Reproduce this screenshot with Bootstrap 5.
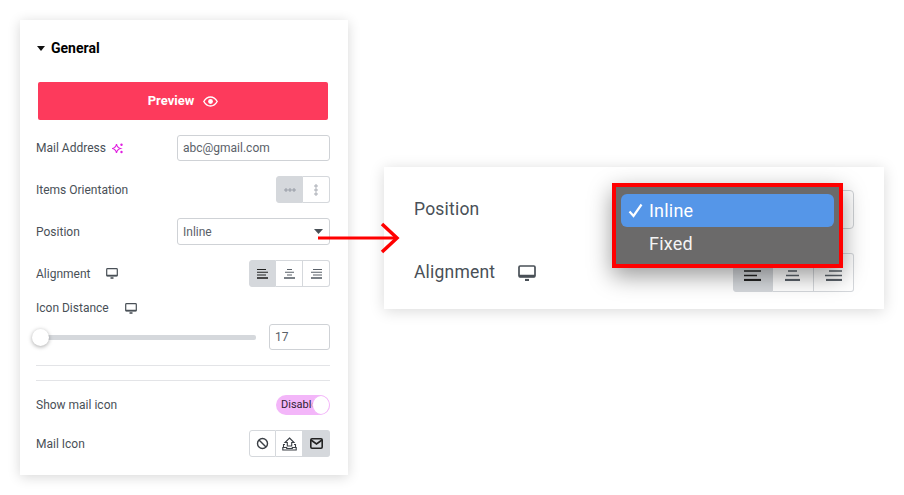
<!DOCTYPE html>
<html lang="en">
<head>
  <meta charset="UTF-8">
  <title>Mail settings</title>
  <link rel="stylesheet" href="https://cdn.jsdelivr.net/npm/bootstrap@5.3.0/dist/css/bootstrap.min.css">
  <style>
  body { background: #fff; font-family: Roboto, "Liberation Sans", sans-serif; color: #495057; height: 495px; overflow: hidden; position: relative; }
  .side-panel { width: 328px; height: 455px; margin: 20px 0 0 20px; padding: 14px 18px 0 16px; background: #fff; box-shadow: 0 2px 12px rgba(0,0,0,.16); flex: none; }
  .zoom-panel { width: 500px; height: 142px; margin: 167px 0 0 36px; padding: 23px 30px 0; background: #fff; box-shadow: 0 2px 14px rgba(0,0,0,.15); flex: none; position: relative; }
  .panel-head { height: 28px; font-size: 14px; font-weight: 700; color: #000; gap: 6px; margin-bottom: 20px; }
  .caret-down { width: 0; height: 0; margin-left: 1px; border-left: 4.5px solid transparent; border-right: 4.5px solid transparent; border-top: 5px solid #111; }
  .preview-btn { display: flex; width: 290px; height: 38px; margin: 0 0 15px 2px; padding: 0; border: 0; border-radius: 2px; background: #fd3a5c; color: #fff; font-size: 13px; font-weight: 700; gap: 9px; }
  .preview-btn:hover { background: #fd3a5c; color: #fff; }
  .set-row { font-size: 12px; margin-bottom: 15px; height: 26px; }
  .set-row.tall { height: 27px; }
  .mon-icon { margin-left: 16px; }
  .spark-icon { margin-left: 6px; }
  .txt-box { width: 153px; height: 100%; min-height: 0; padding: 0 5px; border: 1px solid #cfd2d6; border-radius: 3px; font-size: 12px; color: #5a6169; box-shadow: none; }
  .txt-box.sel { background-image: url("data:image/svg+xml,%3Csvg xmlns='http://www.w3.org/2000/svg' width='9' height='5'%3E%3Cpath d='M0 0h9L4.500 5z' fill='%23495057'/%3E%3C/svg%3E"); background-size: 9px 5px; background-position: right 6px center; }
  .seg-group { height: 100%; }
  .seg-btn { display: flex; align-items: center; justify-content: center; width: 27px; height: 100%; padding: 0; background: #fff; border: 1px solid #d5d8dc; border-radius: 0; }
  .seg-btn + .seg-btn { border-left: 0; }
  .seg-btn:first-child { border-radius: 3px 0 0 3px; }
  .seg-btn:last-child { border-radius: 0 3px 3px 0; }
  .seg-btn.on { background: #d5d8dc; }
  .label-row { height: 20px; margin: -4px 0 0; }
  .slide-row { height: 26px; margin: 6px 0 15px 0; }
  .slide-track { width: 216px; height: 5px; margin-left: 4px; background: #d5d8dc; border-radius: 2px; position: relative; }
  .slide-knob { position: absolute; left: -8px; top: -6px; width: 17px; height: 17px; border-radius: 50%; background: #fff; box-shadow: 0 1px 4px rgba(0,0,0,.35); }
  .num-box { width: 61px; }
  .rule-line { height: 1px; background: #e3e4e7; margin: 0 0 14px; }
  .short-row { height: 20px; }
  .sw-box { position: relative; width: 54px; height: 20px; border-radius: 10px; background: #f3b6f9; color: #2f2233; font-size: 11px; overflow: hidden; padding: 2px 0 0 5px; line-height: 16px; white-space: nowrap; }
  .sw-knob { position: absolute; right: 0; top: 0; width: 18px; height: 20px; border-radius: 50%; background: #fff; border: 1px solid #f3b6f9; }
  .big-row { font-size: 17.5px; letter-spacing: .2px; height: 39px; margin-bottom: 24px; }
  .big-row .mon-icon { margin-left: 23px; }
  .big-select { width: 240px; height: 39px; border: 1px solid #cfd2d6; border-radius: 4px; }
  .big-group { height: 39px; }
  .big-group .seg-btn { width: 40.5px; }
  .mac-menu { position: absolute; left: 228px; top: 16px; width: 231px; height: 85px; padding: 7px 5px; background: #6b6a6a; border: 4px solid #f00; box-shadow: 0 8px 22px rgba(0,0,0,.4); color: #f4f4f4; font-size: 18px; letter-spacing: .2px; }
  .mac-item { height: 33px; padding-left: 7px; border-radius: 6px; gap: 6px; }
  .mac-item.picked { background: #5596e8; color: #fff; }
  .mac-item .tick-space { width: 15px; flex: none; }
  .red-arrow { position: absolute; left: 316px; top: 222px; }
  </style>
</head>
<body class="d-flex align-items-start">
  <div class="side-panel">
    <div class="panel-head d-flex align-items-center"><span class="caret-down d-inline-block"></span><span>General</span></div>

    <button class="btn preview-btn align-items-center justify-content-center">Preview
      <svg width="15" height="11" viewBox="0 0 15 11"><path d="M.8 5.500C2.500 2.600 4.800 1 7.500 1s5 1.600 6.700 4.500C12.500 8.400 10.200 10 7.500 10S2.500 8.400.8 5.500z" fill="none" stroke="#fff" stroke-width="1.400"/><circle cx="7.500" cy="5.500" r="2.400" fill="#fff"/></svg>
    </button>

    <div class="set-row d-flex align-items-center justify-content-between">
      <span class="d-flex align-items-center">Mail Address
        <svg class="spark-icon" width="11" height="11" viewBox="0 0 11 11" fill="none"><path d="M4.500 1Q5 4.500 8.500 5.500 5 6.500 4.500 10 4 6.500.5 5.500 4 4.500 4.500 1z" stroke="#e01fe0" stroke-width="1.200"/><circle cx="9.500" cy="1.800" r="1.200" fill="#e01fe0"/><circle cx="9.500" cy="9" r="1.200" fill="#e01fe0"/></svg>
      </span>
      <input class="form-control txt-box" value="abc@gmail.com">
    </div>

    <div class="set-row tall d-flex align-items-center justify-content-between">
      <span>Items Orientation</span>
      <div class="seg-group d-flex">
        <div class="seg-btn on"><svg width="12" height="4" viewBox="0 0 12 4" fill="none" stroke="#6b7280" stroke-width=".6"><circle cx="2" cy="2" r="1.200"/><circle cx="6" cy="2" r="1.200"/><circle cx="10" cy="2" r="1.200"/></svg></div>
        <div class="seg-btn"><svg width="4" height="12" viewBox="0 0 4 12" fill="none" stroke="#6b7280" stroke-width=".6"><circle cx="2" cy="2" r="1.200"/><circle cx="2" cy="6" r="1.200"/><circle cx="2" cy="10" r="1.200"/></svg></div>
      </div>
    </div>

    <div class="set-row tall d-flex align-items-center justify-content-between">
      <span>Position</span>
      <select class="form-select txt-box sel"><option>Inline</option><option>Fixed</option></select>
    </div>

    <div class="set-row tall d-flex align-items-center justify-content-between">
      <span class="d-flex align-items-center">Alignment
        <svg class="mon-icon" width="12" height="11" viewBox="0 0 12 11" fill="none"><rect x=".7" y=".7" width="10.600" height="7.300" rx=".8" stroke="#495057" stroke-width="1.200"/><path d="M.7 7.500h10.600" stroke="#495057" stroke-width="1.500"/><path d="M4.500 10h3" stroke="#495057" stroke-width="1.600"/></svg>
      </span>
      <div class="seg-group d-flex">
        <div class="seg-btn on"><svg width="11" height="10" viewBox="0 0 11 10" stroke="#222" stroke-width="1.100"><path d="M0 .5h9M0 3.300h11M0 6h9"/><path d="M0 9h11" stroke-width="1.600"/></svg></div>
        <div class="seg-btn"><svg width="11" height="10" viewBox="0 0 11 10" stroke="#5a6169" stroke-width="1.100"><path d="M3 .5h5M1 3.300h9M3 6h5"/><path d="M0 9h11" stroke-width="1.600"/></svg></div>
        <div class="seg-btn"><svg width="11" height="10" viewBox="0 0 11 10" stroke="#5a6169" stroke-width="1.100"><path d="M2 .5h9M0 3.300h11M2 6h9"/><path d="M0 9h11" stroke-width="1.600"/></svg></div>
      </div>
    </div>

    <div class="set-row label-row d-flex align-items-center">
      <span class="d-flex align-items-center">Icon Distance
        <svg class="mon-icon" width="12" height="11" viewBox="0 0 12 11" fill="none"><rect x=".7" y=".7" width="10.600" height="7.300" rx=".8" stroke="#495057" stroke-width="1.200"/><path d="M.7 7.500h10.600" stroke="#495057" stroke-width="1.500"/><path d="M4.500 10h3" stroke="#495057" stroke-width="1.600"/></svg>
      </span>
    </div>

    <div class="slide-row d-flex align-items-center justify-content-between">
      <div class="slide-track"><div class="slide-knob"></div></div>
      <input class="form-control txt-box num-box" value="17">
    </div>

    <div class="rule-line"></div>
    <div class="rule-line"></div>

    <div class="set-row short-row d-flex align-items-center justify-content-between">
      <span>Show mail icon</span>
      <div class="sw-box">Disable<span class="sw-knob"></span></div>
    </div>

    <div class="set-row tall d-flex align-items-center justify-content-between">
      <span>Mail Icon</span>
      <div class="seg-group d-flex">
        <div class="seg-btn"><svg width="13" height="13" viewBox="0 0 13 13" fill="none" stroke="#3a3f45" stroke-width="1.400"><circle cx="6.500" cy="6.500" r="5"/><path d="M3 3l7 7"/></svg></div>
        <div class="seg-btn"><svg width="15" height="14" viewBox="0 0 15 14" fill="none" stroke="#3a3f45" stroke-width="1.100"><path d="M7.500 1 12 5.500H9.700V9H5.300V5.500H3z"/><path d="M3 7.500H1.500v3M12 7.500h1.500v3M.8 10.500h3.900v1h5.600v-1h3.900V13H.8z"/></svg></div>
        <div class="seg-btn on"><svg width="13" height="11" viewBox="0 0 13 11" fill="none" stroke="#222" stroke-width="1.600"><rect x=".8" y=".8" width="11.400" height="9.400" rx="1.200"/><path d="m1 2 5.500 4L12 2"/></svg></div>
      </div>
    </div>
  </div>

  <div class="zoom-panel">
    <div class="big-row d-flex align-items-center justify-content-between">
      <span>Position</span>
      <div class="big-select"></div>
    </div>
    <div class="big-row d-flex align-items-center justify-content-between">
      <span class="d-flex align-items-center">Alignment
        <svg class="mon-icon" width="18" height="16" viewBox="0 0 18 16" fill="none"><rect x="1" y="1" width="16" height="11" rx="1.200" stroke="#495057" stroke-width="1.700"/><path d="M1 11h16" stroke="#495057" stroke-width="2.500"/><path d="M7 15h4" stroke="#495057" stroke-width="2.200"/></svg>
      </span>
      <div class="big-group seg-group d-flex">
        <div class="seg-btn on"><svg width="17" height="16" viewBox="0 0 17 16" stroke="#222" stroke-width="1.600"><path d="M0 1h17M0 6h17M0 10.500h13"/><path d="M0 15h17" stroke-width="2.200"/></svg></div>
        <div class="seg-btn"><svg width="17" height="16" viewBox="0 0 17 16" stroke="#5a6169" stroke-width="1.600"><path d="M2 1h13M4 6h9M2 10.500h13"/><path d="M1 15h15" stroke-width="2.200"/></svg></div>
        <div class="seg-btn"><svg width="17" height="16" viewBox="0 0 17 16" stroke="#5a6169" stroke-width="1.600"><path d="M0 1h17M4 6h13M0 10.500h17"/><path d="M1 15h16" stroke-width="2.200"/></svg></div>
      </div>
    </div>
    <div class="mac-menu">
      <div class="mac-item picked d-flex align-items-center">
        <svg class="tick-space" width="15" height="15" viewBox="0 0 15 15" fill="none" stroke="#fff" stroke-width="2.200"><path d="M1.500 8.500 5.500 13 13.500 1.500"/></svg>
        <span>Inline</span>
      </div>
      <div class="mac-item d-flex align-items-center"><span class="tick-space"></span><span>Fixed</span></div>
    </div>
  </div>

  <svg class="red-arrow" width="86" height="32" viewBox="0 0 86 32" fill="none" stroke="#f00" stroke-width="3"><path d="M2 16h78"/><path d="M66 2l15 14-15 14" stroke-width="3.500"/></svg>
</body>
</html>
